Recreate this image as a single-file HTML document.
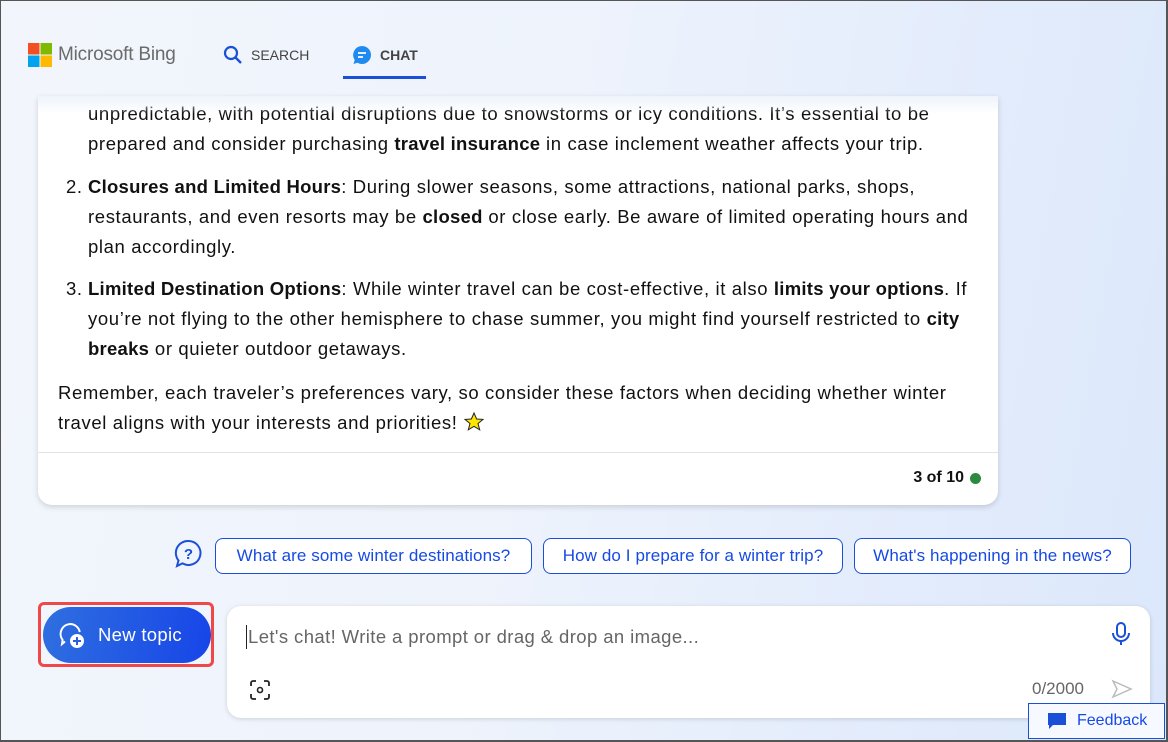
<!DOCTYPE html>
<html><head><meta charset="utf-8"><style>
*{box-sizing:border-box;margin:0;padding:0}
body{width:1168px;height:742px;overflow:hidden;font-family:"Liberation Sans",sans-serif;position:relative;
background:linear-gradient(100deg,#f2f6fc 0%,#eef3fc 45%,#dbe7fb 100%);}
.frame{position:absolute;inset:0;border:1px solid #555;border-right-width:2px;border-bottom-width:2px;pointer-events:none;z-index:10}
.logo{position:absolute;left:28px;top:43px;display:flex;align-items:center;gap:6px;color:#6b6b6b;font-size:19px;letter-spacing:-0.2px}
.nav{position:absolute;top:45px;font-size:14px;color:#444;display:flex;align-items:center;gap:8px}
.card{position:absolute;left:38px;top:96px;width:960px;height:409px;background:#fff;border-radius:0 0 14px 14px;box-shadow:0 2px 6px rgba(0,0,0,.15);font-size:18.5px;color:#111;line-height:30px;letter-spacing:0.62px;white-space:nowrap}
.card b{letter-spacing:0.25px}
.card .l{position:absolute;left:50px}
.fade{position:absolute;left:38px;top:96px;width:960px;height:18px;background:linear-gradient(#eef3fb,rgba(255,255,255,0));z-index:2}
.sep{position:absolute;left:0;right:0;top:356px;border-top:1px solid #e3e3e3}
.cnt{position:absolute;right:17px;top:372px;font-size:16px;font-weight:bold;display:flex;align-items:center;gap:6px;line-height:20px;letter-spacing:0}
.dot{width:11px;height:11px;border-radius:50%;background:#2b8a3e}
.chip{position:absolute;top:538px;height:36px;border:1px solid #1b4fd6;border-radius:8px;background:#fff;color:#174ae4;font-size:17px;line-height:34px;text-align:center;letter-spacing:0.1px}
.nt{position:absolute;left:38px;top:602px;width:176px;height:65px;border:3px solid #f04848;border-radius:6px}
.ntb{position:absolute;left:2px;top:2px;width:168px;height:56px;border-radius:28px;background:linear-gradient(100deg,#2f6fe0,#1745e8);color:#fff;font-size:18.5px;display:flex;align-items:center;padding-left:55px;letter-spacing:0.3px}
.inp{position:absolute;left:227px;top:606px;width:923px;height:112px;background:#fff;border-radius:14px;box-shadow:0 1px 5px rgba(0,0,0,.15)}
.fb{position:absolute;left:1028px;top:703px;width:137px;height:36px;border:1px solid #1b4fd6;background:#f6f9ff;color:#174ae4;font-size:16px;display:flex;align-items:center;gap:10px;padding-left:18px;z-index:5}
</style></head><body>
<div class="logo"><svg width="24" height="24"><rect x="0" y="0" width="11.5" height="11.5" fill="#f25022"/><rect x="12.5" y="0" width="11.5" height="11.5" fill="#7fba00"/><rect x="0" y="12.5" width="11.5" height="11.5" fill="#00a4ef"/><rect x="12.5" y="12.5" width="11.5" height="11.5" fill="#ffb900"/></svg>Microsoft Bing</div>
<div class="nav" style="left:223px"><svg width="20" height="20"><circle cx="8" cy="8" r="6" fill="none" stroke="#1a4fd8" stroke-width="2.2"/><path d="M12.5 12.5L18 18" stroke="#1a4fd8" stroke-width="2.4"/></svg>SEARCH</div>
<div class="nav" style="left:352px;font-weight:bold"><svg width="20" height="20"><path d="M10 1a9 9 0 1 1-4.5 16.8L1.5 19l1.2-4A9 9 0 0 1 10 1z" fill="#1f8bf0"/><path d="M6 8h8M6 12h5" stroke="#fff" stroke-width="1.8"/></svg>CHAT</div>
<div style="position:absolute;left:343px;top:76px;width:83px;height:3px;background:#1a4fd8"></div>
<div class="fade"></div>
<div class="card">
<div class="l" style="top:3px">unpredictable, with potential disruptions due to snowstorms or icy conditions. It’s essential to be<br>prepared and consider purchasing <b>travel insurance</b> in case inclement weather affects your trip.</div>
<div class="l" style="top:76px"><span style="position:absolute;left:-22px">2.</span><b>Closures and Limited Hours</b>: During slower seasons, some attractions, national parks, shops,<br>restaurants, and even resorts may be <b>closed</b> or close early. Be aware of limited operating hours and<br>plan accordingly.</div>
<div class="l" style="top:178px"><span style="position:absolute;left:-22px">3.</span><b>Limited Destination Options</b>: While winter travel can be cost-effective, it also <b>limits your options</b>. If<br>you’re not flying to the other hemisphere to chase summer, you might find yourself restricted to <b>city</b><br><b>breaks</b> or quieter outdoor getaways.</div>
<div style="position:absolute;left:20px;top:282px">Remember, each traveler’s preferences vary, so consider these factors when deciding whether winter<br>travel aligns with your interests and priorities! <svg width="22" height="20" style="vertical-align:-3px"><path d="M11 1l2.6 6 6.4.4-5 4.1 1.7 6.3L11 14.3 5.3 17.8 7 11.5 2 7.4l6.4-.4z" fill="#ffe600" stroke="#222" stroke-width="1"/></svg></div>
<div class="sep"></div>
<div class="cnt">3 of 10 <span class="dot"></span></div>
</div>
<svg style="position:absolute;left:174px;top:539px" width="29" height="29"><path d="M14.5 2a12 12 0 1 1-6 22.4L3 27l1.5-5.5A12 12 0 0 1 14.5 2z" fill="none" stroke="#1a4fd8" stroke-width="2"/><text x="14.5" y="20" font-size="15" font-weight="bold" fill="#1a4fd8" text-anchor="middle" font-family="Liberation Sans">?</text></svg>
<div class="chip" style="left:215px;width:317px">What are some winter destinations?</div>
<div class="chip" style="left:543px;width:300px">How do I prepare for a winter trip?</div>
<div class="chip" style="left:854px;width:277px">What's happening in the news?</div>
<div class="nt"><div class="ntb"><svg style="position:absolute;left:14px;top:14px" width="30" height="30"><path d="M13 3a10 10 0 0 1 9.8 8M8 20.5L5 23l.6-4A10 10 0 0 1 13 3" fill="none" stroke="#fff" stroke-width="2"/><circle cx="20" cy="20" r="7" fill="#fff"/><path d="M20 16v8M16 20h8" stroke="#2a5fe3" stroke-width="2"/></svg>New topic</div></div>
<div class="inp">
<div style="position:absolute;left:19px;top:19px;font-size:18.5px;color:#666;border-left:1.5px solid #222;padding-left:1px;line-height:24px;letter-spacing:0.4px">Let's chat! Write a prompt or drag &amp; drop an image...</div>
<svg style="position:absolute;left:22px;top:73px" width="22" height="22"><path d="M2 7V4a2 2 0 0 1 2-2h3M15 2h3a2 2 0 0 1 2 2v3M20 15v3a2 2 0 0 1-2 2h-3M7 20H4a2 2 0 0 1-2-2v-3" fill="none" stroke="#222" stroke-width="1.8"/><circle cx="11" cy="11" r="2.5" fill="none" stroke="#222" stroke-width="1.6"/></svg>
<svg style="position:absolute;left:884px;top:16px" width="20" height="24"><rect x="6" y="1" width="8" height="14" rx="4" fill="none" stroke="#1a4fd8" stroke-width="2"/><path d="M2 11a8 8 0 0 0 16 0M10 19v4" fill="none" stroke="#1a4fd8" stroke-width="2"/></svg>
<div style="position:absolute;left:805px;top:73px;font-size:17px;color:#666">0/2000</div>
<svg style="position:absolute;left:884px;top:73px" width="22" height="20"><path d="M2 2l18 8-18 8 4-8z" fill="none" stroke="#bbb" stroke-width="1.5"/></svg>
</div>
<div class="fb"><svg width="20" height="20"><path d="M1 2h18v12H6l-4 4v-4H1z" fill="#1a4fd8"/></svg>Feedback</div>
<div class="frame"></div>
</body></html>
